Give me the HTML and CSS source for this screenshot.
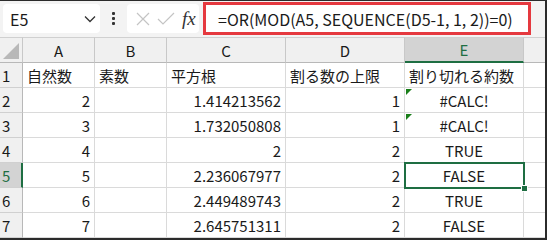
FILE: index.html
```html
<!DOCTYPE html>
<html lang="ja">
<head>
<meta charset="utf-8">
<link rel="stylesheet" href="styles.css">
</head>
<body>
<div class="frame">
  <div class="toolbar">
    <div class="namebox">
      <span class="name">E5</span>
      <svg class="chev" width="12" height="8" viewBox="0 0 12 8"><path d="M1 1.5 L6 6.5 L11 1.5" fill="none" stroke="#333" stroke-width="1.3"/></svg>
    </div>
    <div class="dots"><i></i><i></i><i></i></div>
    <div class="fxbox">
      <svg width="16" height="16" viewBox="0 0 16 16"><path d="M2 2 L14 14 M14 2 L2 14" stroke="#c4c4c4" stroke-width="1.2"/></svg>
      <svg width="18" height="16" viewBox="0 0 18 16"><path d="M1 8 L6 13 L17 2" fill="none" stroke="#c4c4c4" stroke-width="1.2"/></svg>
      <span class="fx">fx</span>
    </div>
    <div class="formula">=OR(MOD(A5, SEQUENCE(D5-1, 1, 2))=0)</div>
  </div>
  <div class="grid">
    <div class="corner"><span class="tri"></span></div>
    <div class="ch">A</div><div class="ch">B</div><div class="ch">C</div><div class="ch">D</div><div class="ch sel">E</div><div class="ch last"></div>

    <div class="rh">1</div><div class="c">自然数</div><div class="c">素数</div><div class="c">平方根</div><div class="c">割る数の上限</div><div class="c">割り切れる約数</div><div class="c last"></div>

    <div class="rh">2</div><div class="c r">2</div><div class="c"></div><div class="c r">1.414213562</div><div class="c r">1</div><div class="c m err">#CALC!</div><div class="c last"></div>
    <div class="rh">3</div><div class="c r">3</div><div class="c"></div><div class="c r">1.732050808</div><div class="c r">1</div><div class="c m err">#CALC!</div><div class="c last"></div>
    <div class="rh">4</div><div class="c r">4</div><div class="c"></div><div class="c r">2</div><div class="c r">2</div><div class="c m">TRUE</div><div class="c last"></div>
    <div class="rh sel">5</div><div class="c r">5</div><div class="c"></div><div class="c r">2.236067977</div><div class="c r">2</div><div class="c m active">FALSE<span class="handle"></span></div><div class="c last"></div>
    <div class="rh">6</div><div class="c r">6</div><div class="c"></div><div class="c r">2.449489743</div><div class="c r">2</div><div class="c m">TRUE</div><div class="c last"></div>
    <div class="rh">7</div><div class="c r">7</div><div class="c"></div><div class="c r">2.645751311</div><div class="c r">2</div><div class="c m">FALSE</div><div class="c last"></div>
  </div>
</div>
</body>
</html>
```
FILE: styles.css
```css
* { box-sizing: border-box; }
html, body { margin: 0; padding: 0; }
body { width: 547px; height: 240px; overflow: hidden; background: #2b2b2b; }
.frame {
  width: 545px; height: 237px; margin-top: 1px;
  background: #f3f3f3;
  font-family: "Noto Sans CJK JP", sans-serif;
  color: #1a1a1a;
  display: flex; flex-direction: column;
}
.toolbar {
  height: 39px; display: flex; align-items: flex-start;
  padding: 1px 0 0 3px;
}
.namebox {
  margin-top: 2px; width: 97px; height: 29px; background: #fff;
  border-radius: 4px; display: flex; align-items: center; justify-content: space-between;
  padding: 0 4px 0 7px;
}
.name { font-size: 16px; font-family: "Noto Sans CJK JP", sans-serif; }
.dots { width: 27px; height: 32px; display: flex; flex-direction: column; align-items: center; justify-content: center; gap: 2px; }
.dots i { width: 3px; height: 3px; background: #333; display: block; border-radius: 1px; }
.fxbox {
  margin-top: 2px; width: 72px; height: 29px; background: #fff; border-radius: 4px;
  display: flex; align-items: center; gap: 6px; padding-left: 8px;
}
.fx { font-family: "Liberation Serif", serif; font-style: italic; font-size: 19px; color: #333; margin-left: 1px; }
.formula {
  margin-left: 4px; width: 328px; height: 33px; background: #fff;
  border: 3px solid #e5393f; padding-left: 12px;
  display: flex; align-items: center;
  font-size: 16px; font-family: "Noto Sans CJK JP", sans-serif; white-space: nowrap;
}
.grid {
  display: grid;
  grid-template-columns: 23px 72px 72px 119px 119px 119px 1fr;
  grid-template-rows: 26px repeat(7, 25px);
  background: #fff;
}
.grid > div { border-right: 1px solid #dadada; border-bottom: 1px solid #dadada; font-size: 15px; display: flex; align-items: center; white-space: nowrap; position: relative; }
.corner { background: #f0f0f0; border-top: 1px solid #d0d0d0; border-right-color: #c8c8c8 !important; border-bottom-color: #b8b8b8 !important; }
.tri { position: absolute; right: 3px; bottom: 3px; width: 0; height: 0; border-left: 16px solid transparent; border-bottom: 16px solid #b8b8b8; }
.ch { background: #f0f0f0; border-top: 1px solid #d0d0d0; justify-content: center; border-right-color: #c8c8c8 !important; border-bottom-color: #b8b8b8 !important; }
.ch.sel { background: #d3d3d3; border-bottom: 2px solid #1e6e42 !important; color: #1e6e42; }
.rh { background: #f0f0f0; padding-left: 2px; border-right-color: #b8b8b8 !important; border-bottom-color: #d0d0d0 !important; }
.rh.sel { background: #d3d3d3; border-right: 2px solid #1e6e42 !important; color: #1e6e42; }
.c { padding: 0 4px; }
.c.r { justify-content: flex-end; }
.c.m { justify-content: center; }
.err::before { content: ""; position: absolute; left: 1px; top: 1px; border-top: 6px solid #1a7f1a; border-right: 6px solid transparent; }
.active { outline: 2px solid #1e6e42; outline-offset: -1px; z-index: 2; }
.handle { position: absolute; right: -5px; bottom: -5px; width: 7px; height: 7px; background: #1e6e42; border: 1px solid #fff; }
.last { border-right: none !important; }
```
